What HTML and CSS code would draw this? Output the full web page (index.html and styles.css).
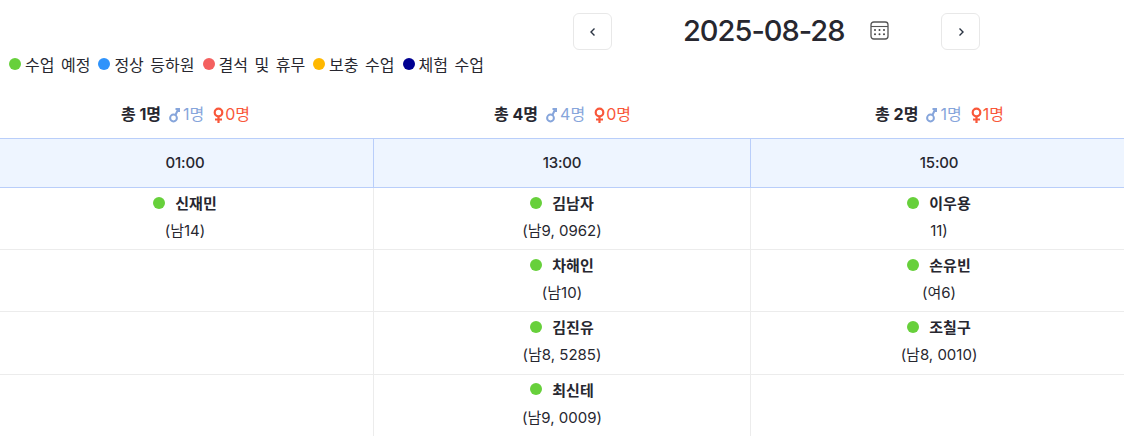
FILE: index.html
```html
<!DOCTYPE html>
<html lang="ko">
<head>
    <meta charset="UTF-8">
    <title>수업 일정</title>
    <link rel="stylesheet" href="styles.css">
</head>
<body>
    <header class="date-nav">
        <button class="nav-btn" aria-label="이전">
            <svg width="12" height="12" viewBox="0 0 12 12"><path d="M7.500 2.500 4 6l3.500 3.500"/></svg>
        </button>
        <div class="date-box">
            <span class="date-text">2025-08-28</span>
            <svg class="cal-icon" width="19" height="19" viewBox="0 0 19 19">
                <rect x="1" y="1" width="17" height="17" rx="2.800" fill="none" stroke="#555" stroke-width="1.300"/>
                <path d="M1 5.500h17" stroke="#555" stroke-width="1.100"/>
                <g fill="#444">
                    <circle cx="5" cy="9" r="1"/><circle cx="9.500" cy="9" r="1"/><circle cx="14" cy="9" r="1"/>
                    <circle cx="5" cy="13.300" r="1"/><circle cx="9.500" cy="13.300" r="1"/><circle cx="14" cy="13.300" r="1"/>
                </g>
            </svg>
        </div>
        <button class="nav-btn" aria-label="다음">
            <svg width="12" height="12" viewBox="0 0 12 12"><path d="M4.500 2.500 8 6 4.500 9.500"/></svg>
        </button>
    </header>

    <!-- 상태 범례 -->
    <ul class="legend">
        <li><span class="dot green"></span>수업 예정</li>
        <li><span class="dot blue"></span>정상 등하원</li>
        <li><span class="dot red"></span>결석 및 휴무</li>
        <li><span class="dot yellow"></span>보충 수업</li>
        <li><span class="dot navy"></span>체험 수업</li>
    </ul>

    <div class="board">
        <div class="summary">
            <b>총 1명</b>
            <span class="male"><svg class="sex" width="11" height="16" viewBox="0 0 11 16"><circle cx="4.500" cy="11" r="3.400"/><path d="M6.500 8 9 2.500M6.500 2H10v3"/></svg>1명</span>
            <span class="female"><svg class="sex" width="13" height="16" viewBox="0 0 13 16"><circle cx="6.500" cy="5.500" r="3.800"/><path d="M6.500 9.300V16M3 12.500h7"/></svg>0명</span>
        </div>
        <div class="summary">
            <b>총 4명</b>
            <span class="male"><svg class="sex" width="11" height="16" viewBox="0 0 11 16"><circle cx="4.500" cy="11" r="3.400"/><path d="M6.500 8 9 2.500M6.500 2H10v3"/></svg>4명</span>
            <span class="female"><svg class="sex" width="13" height="16" viewBox="0 0 13 16"><circle cx="6.500" cy="5.500" r="3.800"/><path d="M6.500 9.300V16M3 12.500h7"/></svg>0명</span>
        </div>
        <div class="summary">
            <b>총 2명</b>
            <span class="male"><svg class="sex" width="11" height="16" viewBox="0 0 11 16"><circle cx="4.500" cy="11" r="3.400"/><path d="M6.500 8 9 2.500M6.500 2H10v3"/></svg>1명</span>
            <span class="female"><svg class="sex" width="13" height="16" viewBox="0 0 13 16"><circle cx="6.500" cy="5.500" r="3.800"/><path d="M6.500 9.300V16M3 12.500h7"/></svg>1명</span>
        </div>

        <div class="time">01:00</div>
        <div class="time">13:00</div>
        <div class="time">15:00</div>

        <div class="cell"><p class="name"><span class="dot green"></span>신재민</p><p class="info">(남14)</p></div>
        <div class="cell"><p class="name"><span class="dot green"></span>김남자</p><p class="info">(남9, 0962)</p></div>
        <div class="cell"><p class="name"><span class="dot green"></span>이우용</p><p class="info">11)</p></div>

        <div class="cell"></div>
        <div class="cell"><p class="name"><span class="dot green"></span>차해인</p><p class="info">(남10)</p></div>
        <div class="cell"><p class="name"><span class="dot green"></span>손유빈</p><p class="info">(여6)</p></div>

        <div class="cell"></div>
        <div class="cell"><p class="name"><span class="dot green"></span>김진유</p><p class="info">(남8, 5285)</p></div>
        <div class="cell"><p class="name"><span class="dot green"></span>조칠구</p><p class="info">(남8, 0010)</p></div>

        <div class="cell"></div>
        <div class="cell"><p class="name"><span class="dot green"></span>최신테</p><p class="info">(남9, 0009)</p></div>
        <div class="cell"></div>
    </div>
</body>
</html>
```

FILE: styles.css
```css
html, body {
    height: 436px;
    overflow: hidden;
}

body {
    margin: 0;
    background-color: #fff;
    color: #27272f;
    font-family: Inter, "Noto Sans CJK KR", sans-serif;
    font-size: 15px;
}

.date-nav {
    display: flex;
    align-items: center;
    height: 37px;
    padding: 13px 0 0 573px;
}

.nav-btn {
    display: flex;
    align-items: center;
    justify-content: center;
    width: 39px;
    height: 37px;
    padding: 0;
    background-color: #fff;
    border: 1px solid #e8e8e8;
    border-radius: 6px;
}

.nav-btn path {
    fill: none;
    stroke: #2a3342;
    stroke-width: 1.400;
}

.date-box {
    display: flex;
    align-items: center;
    width: 329px;
    padding: 0 0 2px 71px;
    box-sizing: border-box;
}

.date-text {
    font-size: 29px;
    font-weight: 500;
    line-height: 35px;
    letter-spacing: -1px;
}

.cal-icon {
    margin-left: 26px;
}

.legend {
    display: flex;
    gap: 8px;
    list-style: none;
    margin: 0;
    padding: 0 0 0 9px;
    height: 28px;
    align-items: center;
    font-size: 16px;
    word-spacing: 2px;
}

.legend li {
    display: flex;
    align-items: center;
    gap: 4px;
}

.dot {
    display: inline-block;
    width: 12px;
    height: 12px;
    border-radius: 50%;
}

.green { background-color: #67d03b; }
.blue { background-color: #2f93fb; }
.red { background-color: #f4605f; }
.yellow { background-color: #ffb800; }
.navy { background-color: #000091; }

.board {
    display: grid;
    grid-template-columns: 377px 377px 377px;
    margin: 10px 0 0 -3px;
}

.summary {
    display: flex;
    justify-content: center;
    align-items: center;
    gap: 8px;
    height: 50px;
    font-size: 16px;
}

.male { color: #86a5db; }
.female { color: #f9573a; }

.sex {
    fill: none;
    stroke: currentColor;
    stroke-width: 2;
    vertical-align: -3px;
    margin-right: 3px;
}

.female .sex {
    margin-right: 0;
    stroke-width: 2.200;
}

.time {
    display: flex;
    align-items: center;
    justify-content: center;
    padding-bottom: 1px;
    height: 47px;
    background-color: #eef5ff;
    border-top: 1px solid #b9cefa;
    border-bottom: 1px solid #b9cefa;
    border-right: 1px solid #b9cefa;
    font-weight: 450;
    letter-spacing: -0.2px;
}

.cell {
    height: 61.200px;
    border-bottom: 1px solid #ececec;
    border-right: 1px solid #ececec;
    text-align: center;
}

.cell p {
    margin: 0;
}

.name {
    display: flex;
    justify-content: center;
    align-items: center;
    gap: 10px;
    height: 29px;
    font-weight: 700;
}

.info {
    line-height: 28px;
}
```
